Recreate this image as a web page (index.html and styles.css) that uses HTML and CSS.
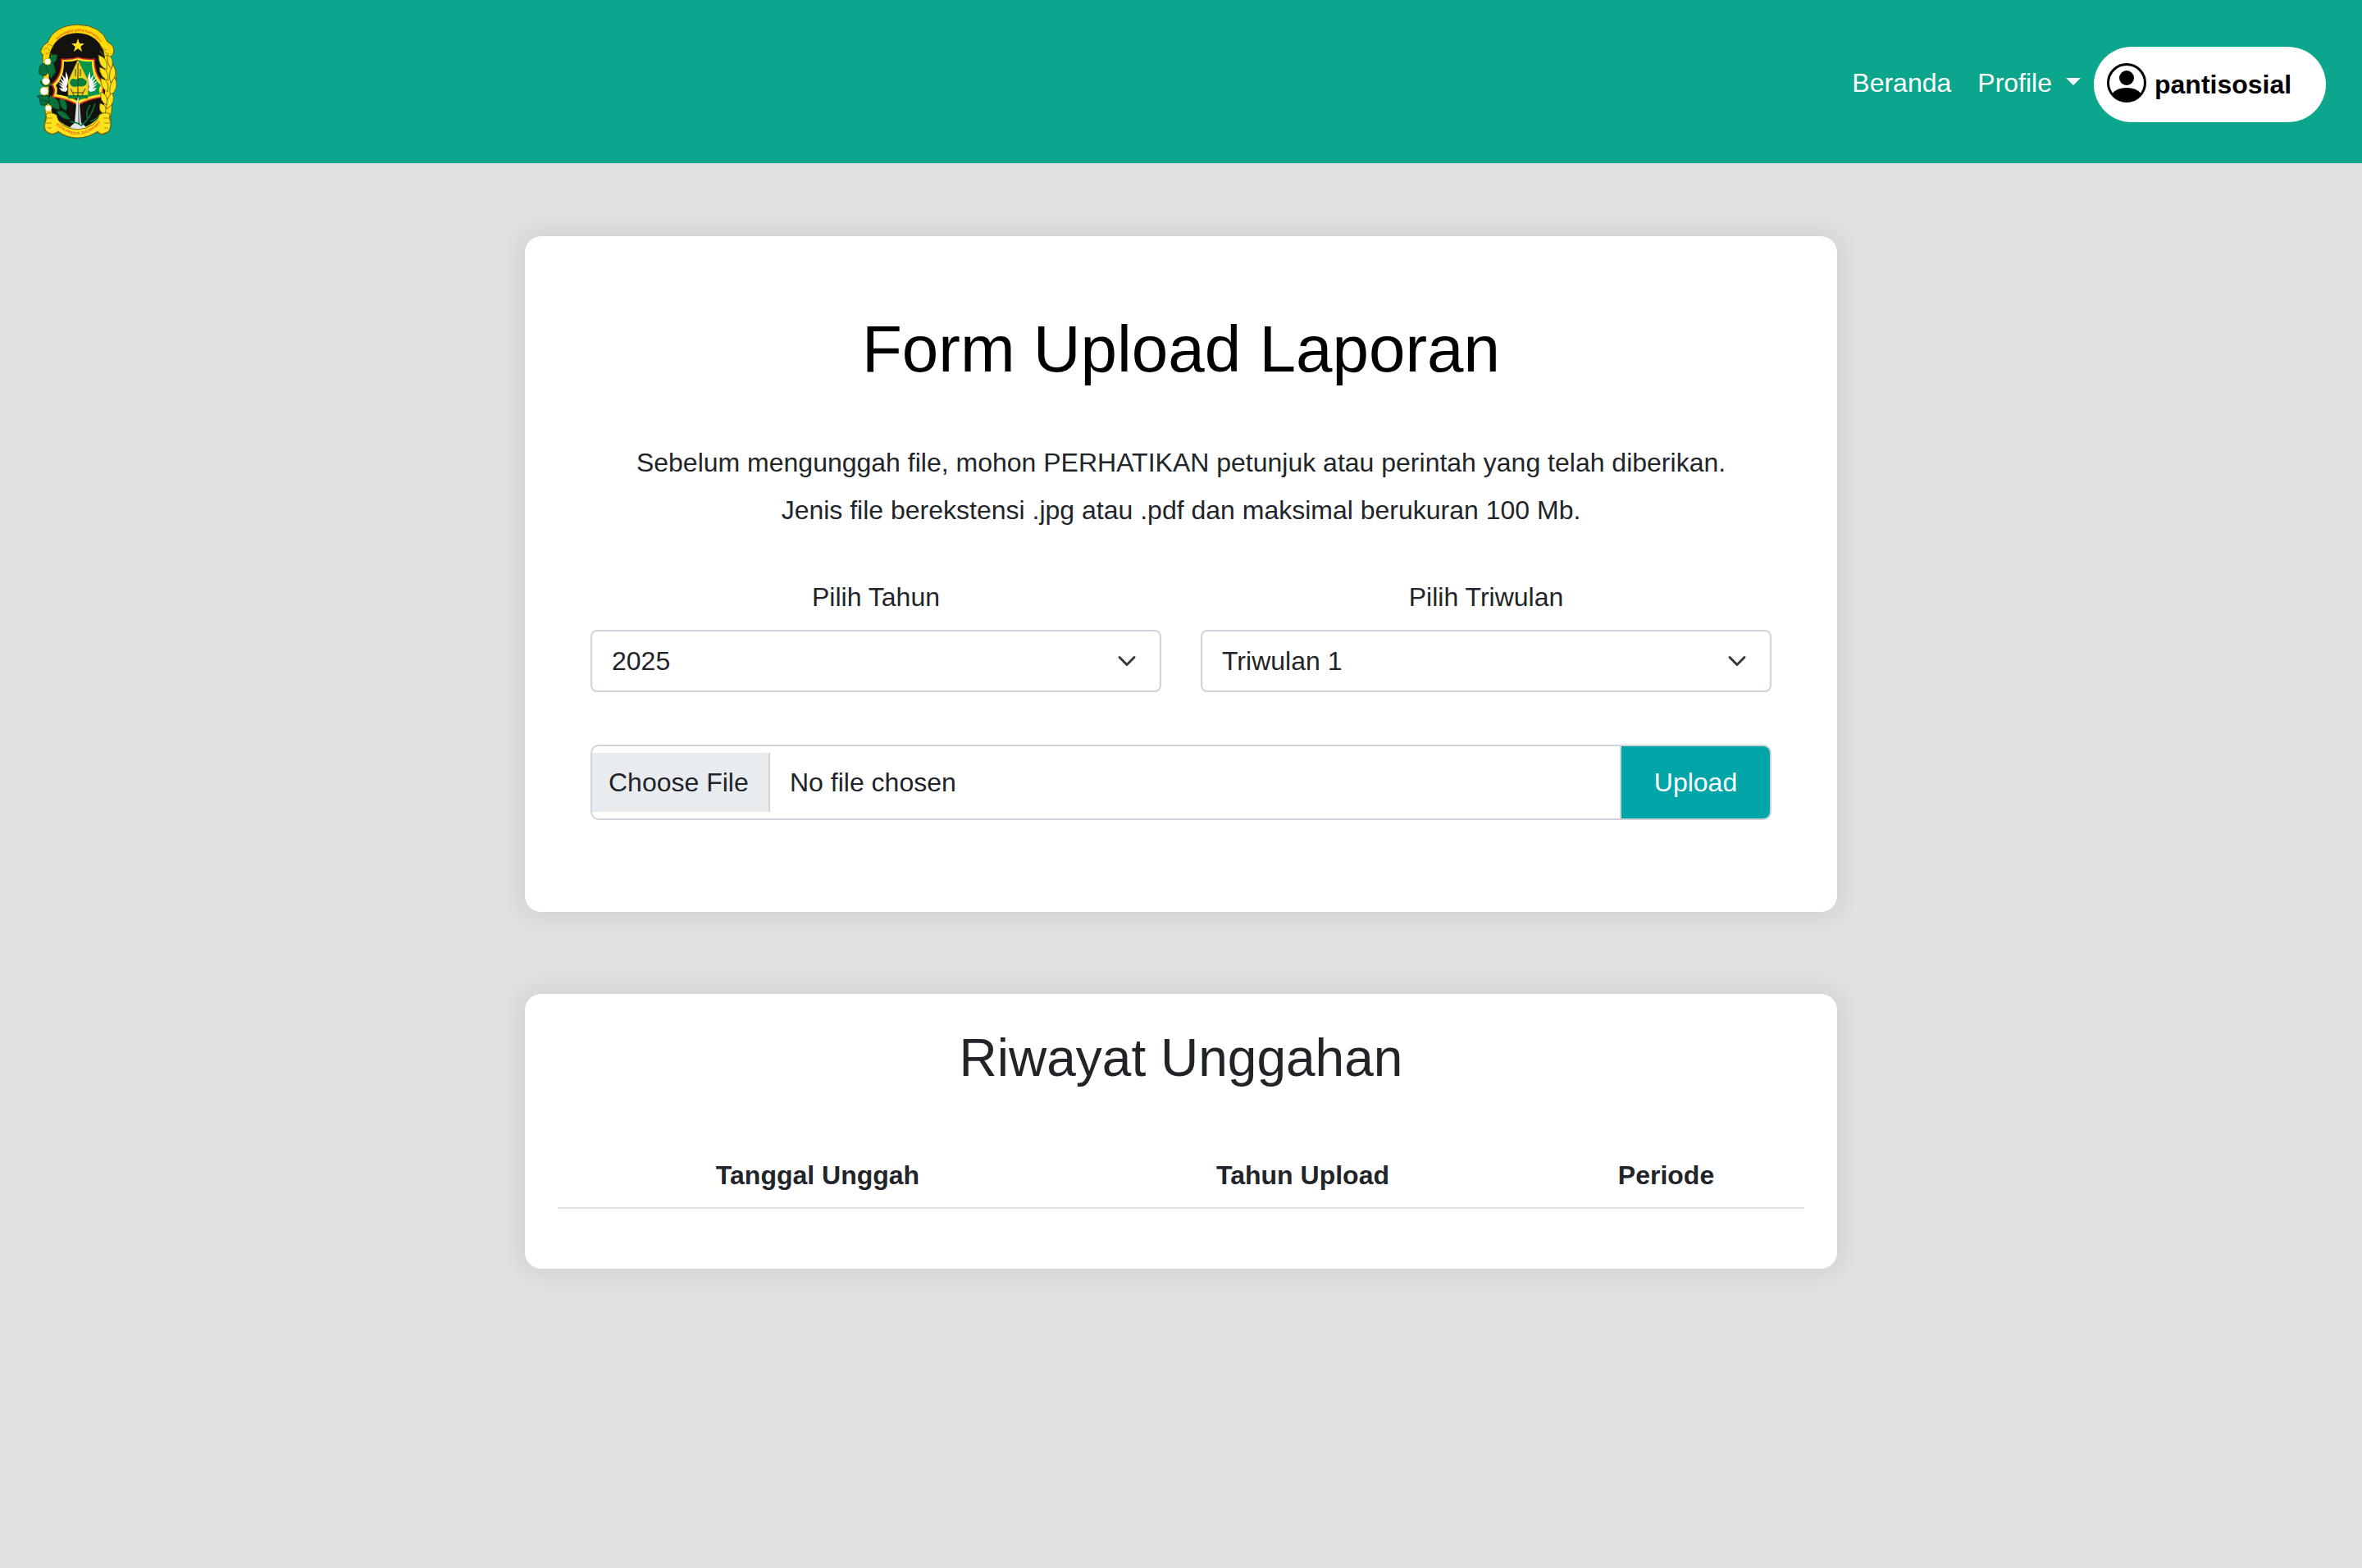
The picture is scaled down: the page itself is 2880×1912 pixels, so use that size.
FILE: index.html
```html
<!DOCTYPE html>
<html lang="id">
<head>
<meta charset="utf-8">
<title>Form Upload Laporan</title>
<link rel="stylesheet" href="styles.css">
</head>
<body>
<nav class="navbar">
  <a class="brand" href="#" aria-label="Kota Pradja Jogjakarta">
    <svg class="crest" viewBox="0 0 100 140">
      <defs>
        <path id="arcTop" d="M22 27C31 3 71 3 80 27"/>
        <path id="arcBottom" d="M22 121Q50 149 79 121"/>
      </defs>
      <path fill="#ffd905" stroke="#55551c" d="M8 37Q4 36 7 30Q10 24 14 23Q22 2 51 1Q79 2 87 22Q95 26 95 33Q95 38 90 41L98 58Q99 70 94 80L92 108Q90 112 91 120Q92 133 84 134Q78 137 75 132Q62 139 50 139Q37 139 27 132Q21 136 16 134Q8 131 10 121Q13 113 11 108L12 80L8 62Z"/>
      <path fill="#14120f" d="M16 45C16 0 84 0 84 45L84 95L80 110Q66 127 50 128Q34 127 20 110L15 95Z"/>
      <path fill="#ffe219" d="M51 18l2 6h5.800l-4.500 4 1.800 6-5.100-3.800-5.100 3.800 1.800-6-4.500-4h5.800z"/>
      <g fill="#08723c" stroke="#0b3927" stroke-width=".8">
        <path d="M12 48Q2 48 4 61Q13 68 16 55Z"/><path d="M14 48Q26 50 26 38Q18 35 14 45Z"/><path d="M11 48l10-1 3 12-6 8z"/>
        <path d="M14 87Q0 84 6 99Q14 101 19 92Z"/><path d="M18 87Q31 94 28 105Q16 103 14 92Z"/><path d="M29 88Q40 94 37 106Q27 103 29 88Z"/>
        <path d="M25 107Q34 103 42 117Q31 117 25 107Z"/><path d="M1 88l13-1 3 8-10-2z"/><path d="M5 71l11-3 3 7-9 2z"/>
      </g>
      <g fill="#fff" stroke="#d5b914"><circle cx="14" cy="46" r="4"/><circle cx="12" cy="70" r="4.500"/><circle cx="10" cy="82" r="5"/><circle cx="15" cy="103" r="4"/></g>
      <path fill="#ffe12b" stroke="#d92325" stroke-width="1.600" d="M31 43Q42 44 51 41Q60 44 71 43Q71 64 84 74Q79 80 83 89Q65 91 51 99Q37 91 20 89Q25 80 19 74Q32 64 31 43Z"/>
      <path fill="#14120f" d="M34 46Q43 47 51 44V94Q39 88 25 86Q27 80 24 75Q34 66 34 46Z"/>
      <path fill="#00964c" d="M51 44Q59 47 68 46Q68 66 79 75Q75 80 78 86Q63 88 51 94Z"/>
      <g fill="#f6f7f4"><path d="M36 58Q42 68 37 77Q40 80 36 83L31 82L28 78L33 79L27 73L33 76L26 69L33 73L28 65L34 70L31 61L36 67Z"/><path d="M66 58Q60 68 65 77Q62 80 66 83L71 82L74 78L69 79L75 73L69 76L76 69L69 73L74 65L68 70L71 61L66 67Z"/></g>
      <path fill="#efd51d" stroke="#988b16" stroke-width=".7" d="M51 44L64 70L63 91H39V70Z"/>
      <path fill="#08823e" d="M41 72Q42 65 49 68Q55 63 62 70Q62 78 51 76Q43 79 41 72ZM39 87H63V91H39Z"/>
      <path fill="none" stroke="#383418" d="M51 48V89M48 55v9m6-9v9M42 79l4 8M60 79l-4 8M45 84h12"/>
      <path fill="#e5e8e5" d="M51 89L53 98L55 121L60 125V128H42V125L47 121L49 98Z"/><path fill="#899293" d="M51 92v31h3l-2-25z"/>
      <g fill="#ffe21b" stroke="#55551c" stroke-width=".8">
        <path d="M76 38Q89 42 86 56Q76 52 76 38Z"/><path d="M77 53Q89 55 88 69Q78 66 77 53Z"/><path d="M79 66Q91 70 87 83Q78 78 79 66Z"/><path d="M94 50Q101 62 91 72Q87 60 94 50Z"/><path d="M96 65Q102 78 91 88Q87 77 96 65Z"/><path d="M93 84Q98 97 86 104Q84 92 93 84Z"/><path d="M79 83Q89 87 86 99Q77 95 79 83Z"/><path d="M78 97Q88 99 84 110Q75 108 78 97Z"/><path d="M87 38Q96 41 92 55Q86 49 87 38Z"/>
      </g>
      <path fill="none" stroke="#08723c" stroke-width="1.600" d="M41 119Q50 120 55 124Q66 117 72 97M63 117Q60 106 66 99M66 119Q76 116 79 109"/>
      <path fill="#ffe21b" stroke="#55551c" stroke-width=".8" d="M12 110Q18 107 25 111Q27 127 50 129Q74 127 77 111Q84 107 90 110Q88 115 91 121Q91 132 84 133Q79 136 75 131Q64 139 50 139Q37 139 27 131Q21 136 16 133Q9 131 11 121Q14 115 12 110Z"/>
      <path fill="none" stroke="#8c7d15" stroke-width=".8" d="M13 115h7M12 121h7M14 127h5M82 115h7M83 121h7M83 127h5M9 32q5-6 8 2m-5 3q7-4 7 3m-5-14q6-2 7 4m59-2q3 8 9 9m-11-4q3 6 9 6m-9-14q1 6 8 7"/>
      <text class="crest-motto"><textPath href="#arcTop" startOffset="8">hamangku gatra hamangun</textPath></text>
      <text class="crest-name"><textPath href="#arcBottom" startOffset="3">KOTA PRADJA JOGJAKARTA</textPath></text>
    </svg>
  </a>
  <div class="nav-links">
    <a class="nav-link" href="#">Beranda</a>
    <a class="nav-link dropdown" href="#">Profile</a>
    <a class="user-pill" href="#">
      <svg class="user-icon" viewBox="0 0 48 48"><circle cx="24" cy="24" r="22.500" fill="#fff" stroke="#000" stroke-width="3"/><circle cx="24" cy="18" r="9"/><path d="M6.500 37Q12 30 24 30T41.500 37Q35 47 24 47T6.500 37Z"/></svg>
      <span>pantisosial</span>
    </a>
  </div>
</nav>
<main class="page">
  <section class="card upload-card">
    <h1 class="title">Form Upload Laporan</h1>
    <p class="intro">Sebelum mengunggah file, mohon PERHATIKAN petunjuk atau perintah yang telah diberikan.<br>Jenis file berekstensi .jpg atau .pdf dan maksimal berukuran 100 Mb.</p>
    <div class="fields">
      <div class="field">
        <span class="label">Pilih Tahun</span>
        <div class="select"><span>2025</span><svg class="chevron" viewBox="0 0 16 16"><path d="M2 5l6 6 6-6"/></svg></div>
      </div>
      <div class="field">
        <span class="label">Pilih Triwulan</span>
        <div class="select"><span>Triwulan 1</span><svg class="chevron" viewBox="0 0 16 16"><path d="M2 5l6 6 6-6"/></svg></div>
      </div>
    </div>
    <div class="file-group">
      <span class="choose">Choose File</span>
      <span class="file-name">No file chosen</span>
      <button class="upload" type="button">Upload</button>
    </div>
  </section>
  <section class="card history-card">
    <h2 class="subtitle">Riwayat Unggahan</h2>
    <table class="history">
      <thead><tr><th class="col-date">Tanggal Unggah</th><th class="col-year">Tahun Upload</th><th>Periode</th></tr></thead>
    </table>
  </section>
</main>
</body>
</html>
```
FILE: styles.css
```css
* { box-sizing: border-box; }
body {
  margin: 0;
  min-height: 1912px;
  background: #e0e0e0;
  color: #212529;
  font: 32px/48px "Liberation Sans", Arial, sans-serif;
}
a { color: inherit; text-decoration: none; }
.navbar {
  display: flex;
  justify-content: space-between;
  height: 199px;
  padding: 29px 44px 0 44px;
  background: #0ba68c;
}
.brand { display: block; height: 140px; }
.crest { display: block; width: 100px; height: 140px; overflow: visible; }
.crest-motto, .crest-name { font-family: "Liberation Sans", Arial, sans-serif; font-weight: bold; fill: #ef5b16; }
.crest-motto { font-size: 4.6px; }
.crest-name { font-size: 4.6px; }
.nav-links { display: flex; align-items: flex-start; padding-top: 28px; }
.nav-link { padding: 20px 16px 0; color: #fff; }
.dropdown { display: flex; padding-right: 16px; }
.dropdown::after {
  content: "";
  margin: 18px 0 0 17px;
  width: 0;
  height: 0;
  border: 9px solid transparent;
  border-top-color: #fff;
  border-bottom: 0;
}
.user-pill {
  display: flex;
  width: 283px;
  height: 92px;
  padding: 20px 0 0 16px;
  border-radius: 46px;
  background: #fff;
  color: #000;
  font-weight: bold;
}
.user-icon { width: 48px; height: 48px; margin-right: 10px; }
.user-pill span { padding-top: 2px; }
.page { width: 1600px; margin: 89px auto 0; }
.card {
  border-radius: 20px;
  background: #fff;
  box-shadow: 0 0 30px rgba(0, 0, 0, .1);
  text-align: center;
}
.upload-card { height: 824px; padding: 90px 80px 0; }
.title { margin: 0; font-size: 80px; font-weight: 400; line-height: 96px; color: #000; }
.intro { margin: 61px 0 0; line-height: 58px; }
.fields { display: flex; gap: 48px; margin-top: 53px; }
.field { flex: 1; }
.label { display: block; height: 64px; }
.select {
  display: flex;
  align-items: center;
  justify-content: space-between;
  height: 76px;
  padding: 0 26px 0 24px;
  border: 2px solid #ced4da;
  border-radius: 8px;
  background: #fff;
}
.chevron { width: 24px; height: 24px; margin-right: 2px; fill: none; stroke: #343a40; stroke-width: 2; stroke-linecap: round; stroke-linejoin: round; }
.file-group {
  display: flex;
  align-items: center;
  height: 92px;
  margin-top: 64px;
  border: 2px solid #ced4da;
  border-radius: 10px;
  overflow: hidden;
}
.choose {
  width: 217px;
  height: 72px;
  padding: 12px 0 0 20px;
  border-right: 2px solid #ced4da;
  background: #e9ecef;
  text-align: left;
}
.file-name { flex: 1; padding-left: 24px; text-align: left; }
.upload {
  width: 183px;
  height: 88px;
  padding: 0;
  border: 0;
  border-left: 2px solid #ced4da;
  background: #00a5a8;
  color: #fff;
  font: inherit;
}
.history-card { height: 335px; margin-top: 100px; padding: 40px 40px 0; }
.subtitle { margin: 0; font-size: 64px; font-weight: 400; line-height: 77px; }
.history { width: 1520px; margin-top: 66px; border-collapse: collapse; table-layout: fixed; }
.history th { height: 78px; padding: 13px 0 15px; border-bottom: 2px solid #dee2e6; }
.col-date { width: 634px; }
.col-year { width: 549px; }
```
